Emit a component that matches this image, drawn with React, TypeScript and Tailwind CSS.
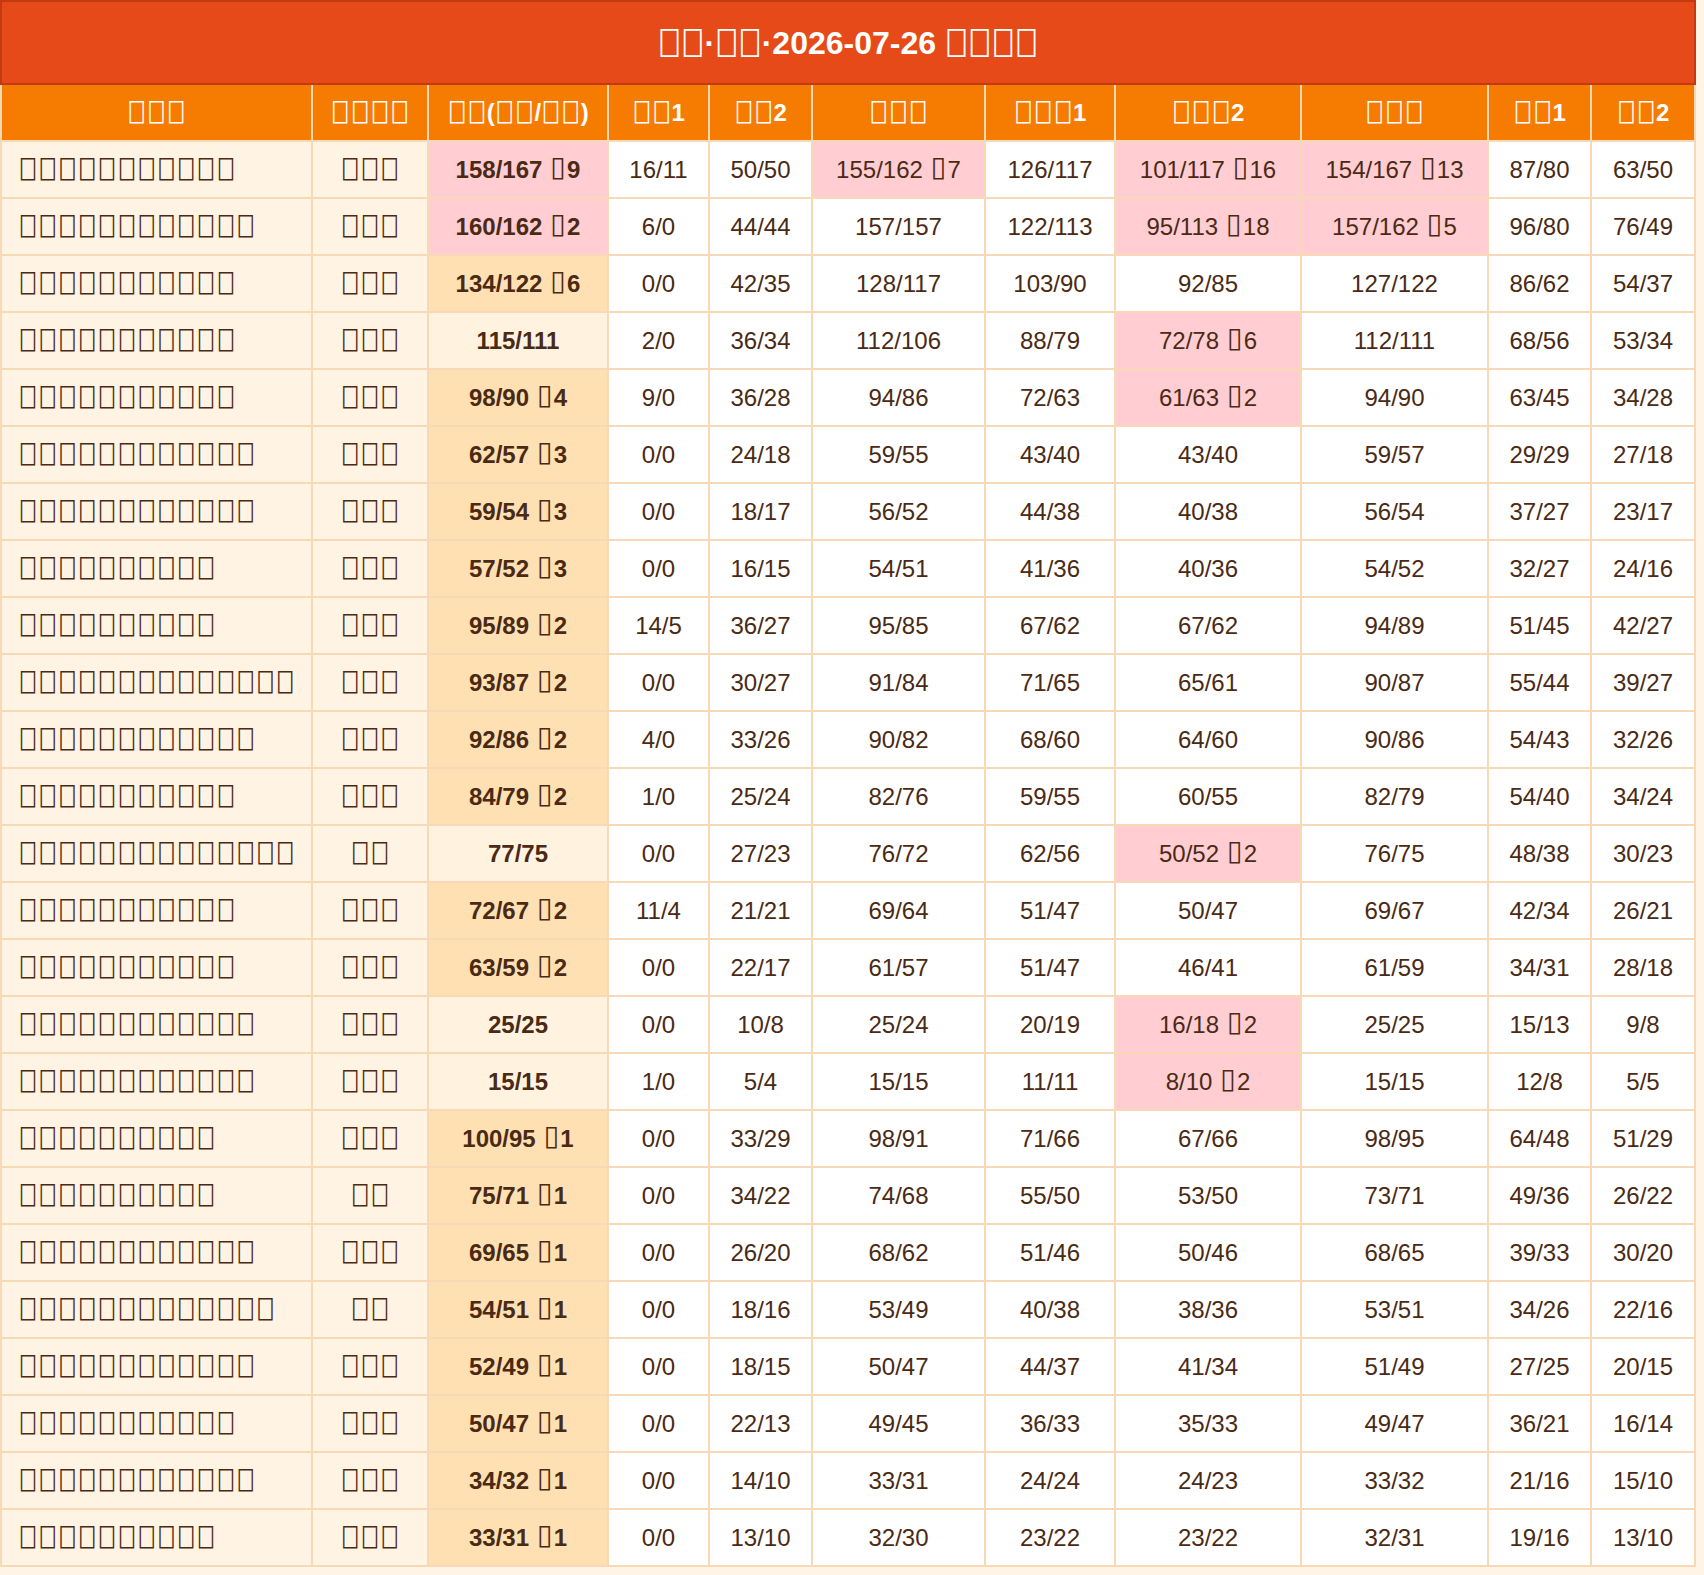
import React from 'react';

// --- Palette ---
const BORDER = 'bg-[#f8d9b6]';

type Tone = 'pink' | 'orange' | 'light' | 'white';

const toneStyles: Record<Tone, string> = {
  pink: 'bg-[#ffcdd2]',
  orange: 'bg-[#ffe0b2]',
  light: 'bg-[#fff3e0]',
  white: 'bg-white',
};

const COLS =
  'grid grid-cols-[309px_114px_178px_99px_101px_171px_128px_184px_185px_101px_102px] gap-[2px]';

// the source text is lost: only the boxes are left, one span per box
type BoxKind = 'cjk' | 'arrow' | 'title';

const boxStyles: Record<BoxKind, string> = {
  cjk: "inline-block w-[19.8px] text-center font-['DejaVu_Sans_Mono'] font-normal text-[24px] leading-none",
  arrow: "inline-block w-[18px] text-center align-[2px] font-['DejaVu_Sans'] font-normal text-[28px] leading-none",
  title: "inline-block w-[23.3px] text-center font-['DejaVu_Sans_Mono'] font-normal text-[30px] leading-none",
};

const Boxes: React.FC<{ text: string; kind?: BoxKind }> = ({ text, kind = 'cjk' }) => {
  const parts = text.split(/([⎕▯])/).filter(Boolean);
  return (
    <span>
      {parts.map((p, i) =>
        p === '⎕' || p === '▯' ? (
          <span key={i} className={boxStyles[kind]}>
            {p}
          </span>
        ) : (
          <span key={i}>{p}</span>
        ),
      )}
    </span>
  );
};

const headers = [
  '⎕⎕⎕',
  '⎕⎕⎕⎕',
  '⎕⎕(⎕⎕/⎕⎕)',
  '⎕⎕1',
  '⎕⎕2',
  '⎕⎕⎕',
  '⎕⎕⎕1',
  '⎕⎕⎕2',
  '⎕⎕⎕',
  '⎕⎕1',
  '⎕⎕2',
];

interface Row {
  name: number;
  kind: number;
  main: string;
  mainTone: Tone;
  cells: string[];
}

const raw: [number, number, string, string[]][] = [
  [11, 3, '158/167 ▯9', ['16/11', '50/50', '155/162 ▯7', '126/117', '101/117 ▯16', '154/167 ▯13', '87/80', '63/50']],
  [12, 3, '160/162 ▯2', ['6/0', '44/44', '157/157', '122/113', '95/113 ▯18', '157/162 ▯5', '96/80', '76/49']],
  [11, 3, '134/122 ▯6', ['0/0', '42/35', '128/117', '103/90', '92/85', '127/122', '86/62', '54/37']],
  [11, 3, '115/111', ['2/0', '36/34', '112/106', '88/79', '72/78 ▯6', '112/111', '68/56', '53/34']],
  [11, 3, '98/90 ▯4', ['9/0', '36/28', '94/86', '72/63', '61/63 ▯2', '94/90', '63/45', '34/28']],
  [12, 3, '62/57 ▯3', ['0/0', '24/18', '59/55', '43/40', '43/40', '59/57', '29/29', '27/18']],
  [12, 3, '59/54 ▯3', ['0/0', '18/17', '56/52', '44/38', '40/38', '56/54', '37/27', '23/17']],
  [10, 3, '57/52 ▯3', ['0/0', '16/15', '54/51', '41/36', '40/36', '54/52', '32/27', '24/16']],
  [10, 3, '95/89 ▯2', ['14/5', '36/27', '95/85', '67/62', '67/62', '94/89', '51/45', '42/27']],
  [14, 3, '93/87 ▯2', ['0/0', '30/27', '91/84', '71/65', '65/61', '90/87', '55/44', '39/27']],
  [12, 3, '92/86 ▯2', ['4/0', '33/26', '90/82', '68/60', '64/60', '90/86', '54/43', '32/26']],
  [11, 3, '84/79 ▯2', ['1/0', '25/24', '82/76', '59/55', '60/55', '82/79', '54/40', '34/24']],
  [14, 2, '77/75', ['0/0', '27/23', '76/72', '62/56', '50/52 ▯2', '76/75', '48/38', '30/23']],
  [11, 3, '72/67 ▯2', ['11/4', '21/21', '69/64', '51/47', '50/47', '69/67', '42/34', '26/21']],
  [11, 3, '63/59 ▯2', ['0/0', '22/17', '61/57', '51/47', '46/41', '61/59', '34/31', '28/18']],
  [12, 3, '25/25', ['0/0', '10/8', '25/24', '20/19', '16/18 ▯2', '25/25', '15/13', '9/8']],
  [12, 3, '15/15', ['1/0', '5/4', '15/15', '11/11', '8/10 ▯2', '15/15', '12/8', '5/5']],
  [10, 3, '100/95 ▯1', ['0/0', '33/29', '98/91', '71/66', '67/66', '98/95', '64/48', '51/29']],
  [10, 2, '75/71 ▯1', ['0/0', '34/22', '74/68', '55/50', '53/50', '73/71', '49/36', '26/22']],
  [12, 3, '69/65 ▯1', ['0/0', '26/20', '68/62', '51/46', '50/46', '68/65', '39/33', '30/20']],
  [13, 2, '54/51 ▯1', ['0/0', '18/16', '53/49', '40/38', '38/36', '53/51', '34/26', '22/16']],
  [12, 3, '52/49 ▯1', ['0/0', '18/15', '50/47', '44/37', '41/34', '51/49', '27/25', '20/15']],
  [11, 3, '50/47 ▯1', ['0/0', '22/13', '49/45', '36/33', '35/33', '49/47', '36/21', '16/14']],
  [12, 3, '34/32 ▯1', ['0/0', '14/10', '33/31', '24/24', '24/23', '33/32', '21/16', '15/10']],
  [10, 3, '33/31 ▯1', ['0/0', '13/10', '32/30', '23/22', '23/22', '32/31', '19/16', '13/10']],
];

const rows: Row[] = raw.map(([name, kind, main, cells], i) => ({
  name,
  kind,
  main,
  mainTone: i < 2 ? 'pink' : main.includes('▯') ? 'orange' : 'light',
  cells,
}));

const cellBase = 'h-[55px] flex items-center justify-center whitespace-nowrap leading-[40px]';

export default function App() {
  return (
    <div className="min-h-screen bg-[#fff4e5] font-['Liberation_Sans',sans-serif] text-[#4a2a14]">
      <div className="w-[1696px]">
        <div className="h-[85px] bg-[#e64a19] border-2 border-[#c43a10] flex items-center justify-center">
          <h1 className="text-[32px] leading-[48px] font-bold text-white whitespace-nowrap">
            <Boxes text="⎕⎕·⎕⎕·2026-07-26 ⎕⎕⎕⎕" kind="title" />
          </h1>
        </div>

        <div className={`${BORDER} flex flex-col gap-[2px] px-[2px] pb-[2px]`}>
          <div className={COLS}>
            {headers.map((h, i) => (
              <div key={i} className={`${cellBase} bg-[#f57c00] text-white text-[24px] font-bold`}>
                <Boxes text={h} />
              </div>
            ))}
          </div>

          {rows.map((r, i) => (
            <div key={i} className={`${COLS} text-[24px]`}>
              <div className="h-[55px] flex items-center pl-[16px] bg-[#fff4e4] whitespace-nowrap leading-[40px]">
                <Boxes text={'⎕'.repeat(r.name)} />
              </div>
              <div className={`${cellBase} bg-[#fff4e4]`}>
                <Boxes text={'⎕'.repeat(r.kind)} />
              </div>
              <div className={`${cellBase} ${toneStyles[r.mainTone]} font-bold`}>
                <Boxes text={r.main} kind="arrow" />
              </div>
              {r.cells.map((c, j) => (
                <div key={j} className={`${cellBase} ${c.includes('▯') ? toneStyles.pink : toneStyles.white}`}>
                  <Boxes text={c} kind="arrow" />
                </div>
              ))}
            </div>
          ))}
        </div>
      </div>
    </div>
  );
}
